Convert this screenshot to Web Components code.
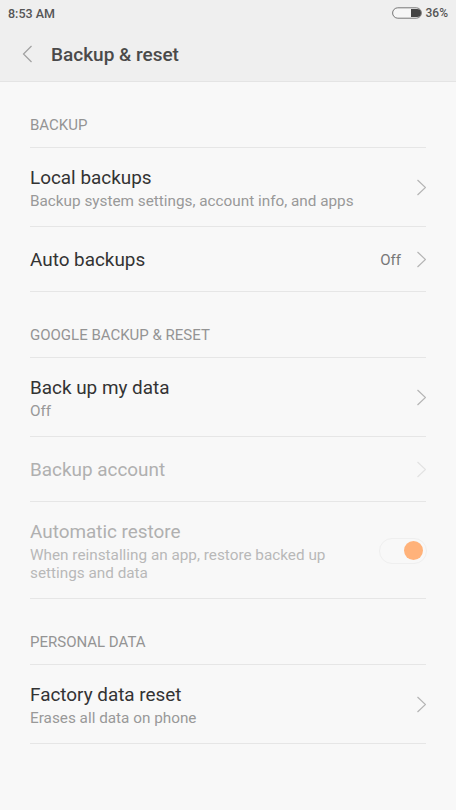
<!DOCTYPE html>
<html>
<head>
<meta charset="utf-8">
<style>
    html, body { margin: 0; height: 100%; }
    body { background: #f8f8f8; font-family: Roboto, "Liberation Sans", sans-serif; overflow: hidden; }
</style>
</head>
<body>
<settings-header title="Backup &amp; reset" time="8:53 AM" battery="36%"></settings-header>
<settings-section label="BACKUP">
    <settings-row title="Local backups" summary="Backup system settings, account info, and apps" chevron></settings-row>
    <settings-row title="Auto backups" value="Off" chevron></settings-row>
</settings-section>
<settings-section label="GOOGLE BACKUP &amp; RESET">
    <settings-row title="Back up my data" summary="Off" chevron></settings-row>
    <settings-row title="Backup account" chevron disabled></settings-row>
    <settings-row title="Automatic restore" summary="When reinstalling an app, restore backed up settings and data" disabled>
        <toggle-switch slot="control"></toggle-switch>
    </settings-row>
</settings-section>
<settings-section label="PERSONAL DATA">
    <settings-row title="Factory data reset" summary="Erases all data on phone" chevron></settings-row>
</settings-section>

<script>
class SettingsHeader extends HTMLElement {
    connectedCallback() {
        this.attachShadow({ mode: 'open' });
        this.shadowRoot.innerHTML = `
            <style>
                :host {
                    display: block;
                    height: 81px;
                    background: #efefef;
                    border-bottom: 1px solid #e4e4e4;
                }
                .status {
                    height: 26px;
                    display: flex;
                    align-items: center;
                    justify-content: space-between;
                    padding: 0 8px;
                    font-size: 12.5px;
                    font-weight: 500;
                    color: #555;
                }
                .battery { display: flex; align-items: center; gap: 4px; font-size: 12px; }
                .bar {
                    display: flex;
                    align-items: center;
                    height: 36px;
                    padding-top: 10px;
                }
                .bar svg { margin-left: 22px; }
                h1 {
                    margin: 0 0 0 19px;
                    font-size: 19px;
                    font-weight: 500;
                    color: #4a4a4a;
                }
            </style>
            <div class="status">
                <span>${this.getAttribute('time')}</span>
                <span class="battery">
                    <svg width="30" height="12" viewBox="0 0 30 12">
                        <rect x="0.6" y="0.8" width="28.8" height="10.4" rx="5.2" fill="#f6f6f6" stroke="#777" stroke-width="1"/>
                        <path d="M19 2h6a4 4 0 0 1 0 8h-6z" fill="#444"/>
                    </svg>
                    <span>${this.getAttribute('battery')}</span>
                </span>
            </div>
            <div class="bar">
                <svg width="10" height="18" viewBox="0 0 10 18">
                    <path d="M9.5 1L1.5 9l8 8" fill="none" stroke="#a0a0a0" stroke-width="1.2"/>
                </svg>
                <h1>${this.getAttribute('title').replace('&', '&amp;')}</h1>
            </div>
        `;
    }
}

class SettingsSection extends HTMLElement {
    connectedCallback() {
        this.attachShadow({ mode: 'open' });
        this.shadowRoot.innerHTML = `
            <style>
                :host { display: block; padding: 0 30px; }
                .label {
                    height: 66px;
                    box-sizing: border-box;
                    padding-top: 35px;
                    font-size: 15px;
                    line-height: 17px;
                    color: #949494;
                    border-bottom: 1px solid #e6e6e6;
                }
            </style>
            <div class="label">${this.getAttribute('label').replace('&', '&amp;')}</div>
            <slot></slot>
        `;
    }
}

class SettingsRow extends HTMLElement {
    connectedCallback() {
        this.attachShadow({ mode: 'open' });
        const summary = this.getAttribute('summary');
        const value = this.getAttribute('value');
        this.shadowRoot.innerHTML = `
            <style>
                :host {
                    display: flex;
                    align-items: center;
                    box-sizing: border-box;
                    min-height: 65px;
                    border-bottom: 1px solid #e6e6e6;
                }
                .text { flex: 1; min-width: 0; }
                .title { font-size: 18.9px; line-height: 25px; color: #333; }
                .summary { margin-top: 2px; font-size: 15.3px; line-height: 18px; color: #999; }
                :host([summary]) { padding: 17px 0 16px; }
                :host([disabled]) .title { color: #b0b0b0; }
                :host([disabled]) .summary { color: #b8b8b8; max-width: 310px; }
                .value { font-size: 15px; color: #777; margin: 1px 15px 0 0; }
                svg { display: block; flex: none; }
                :host([disabled]) svg path { stroke: #e2e2e2; }
            </style>
            <div class="text">
                <div class="title">${this.getAttribute('title')}</div>
                ${summary ? `<div class="summary">${summary}</div>` : ''}
            </div>
            ${value ? `<span class="value">${value}</span>` : ''}
            ${this.hasAttribute('chevron') ? `
                <svg width="10" height="17" viewBox="0 0 10 17">
                    <path d="M1.5 1l8 7.5-8 7.5" fill="none" stroke="#b4b4b4" stroke-width="1.2"/>
                </svg>` : ''}
            <slot name="control"></slot>
        `;
    }
}

class ToggleSwitch extends HTMLElement {
    connectedCallback() {
        this.attachShadow({ mode: 'open' });
        this.shadowRoot.innerHTML = `
            <style>
                :host {
                    display: flex;
                    justify-content: flex-end;
                    align-items: center;
                    box-sizing: border-box;
                    width: 48px;
                    height: 26px;
                    margin-right: -1px;
                    padding-right: 3px;
                    border: 1px solid #efefef;
                    border-radius: 13px;
                }
                .knob { width: 19px; height: 19px; border-radius: 50%; background: #ffb27a; }
            </style>
            <div class="knob"></div>
        `;
    }
}

customElements.define('settings-header', SettingsHeader);
customElements.define('settings-section', SettingsSection);
customElements.define('settings-row', SettingsRow);
customElements.define('toggle-switch', ToggleSwitch);
</script>
</body>
</html>
